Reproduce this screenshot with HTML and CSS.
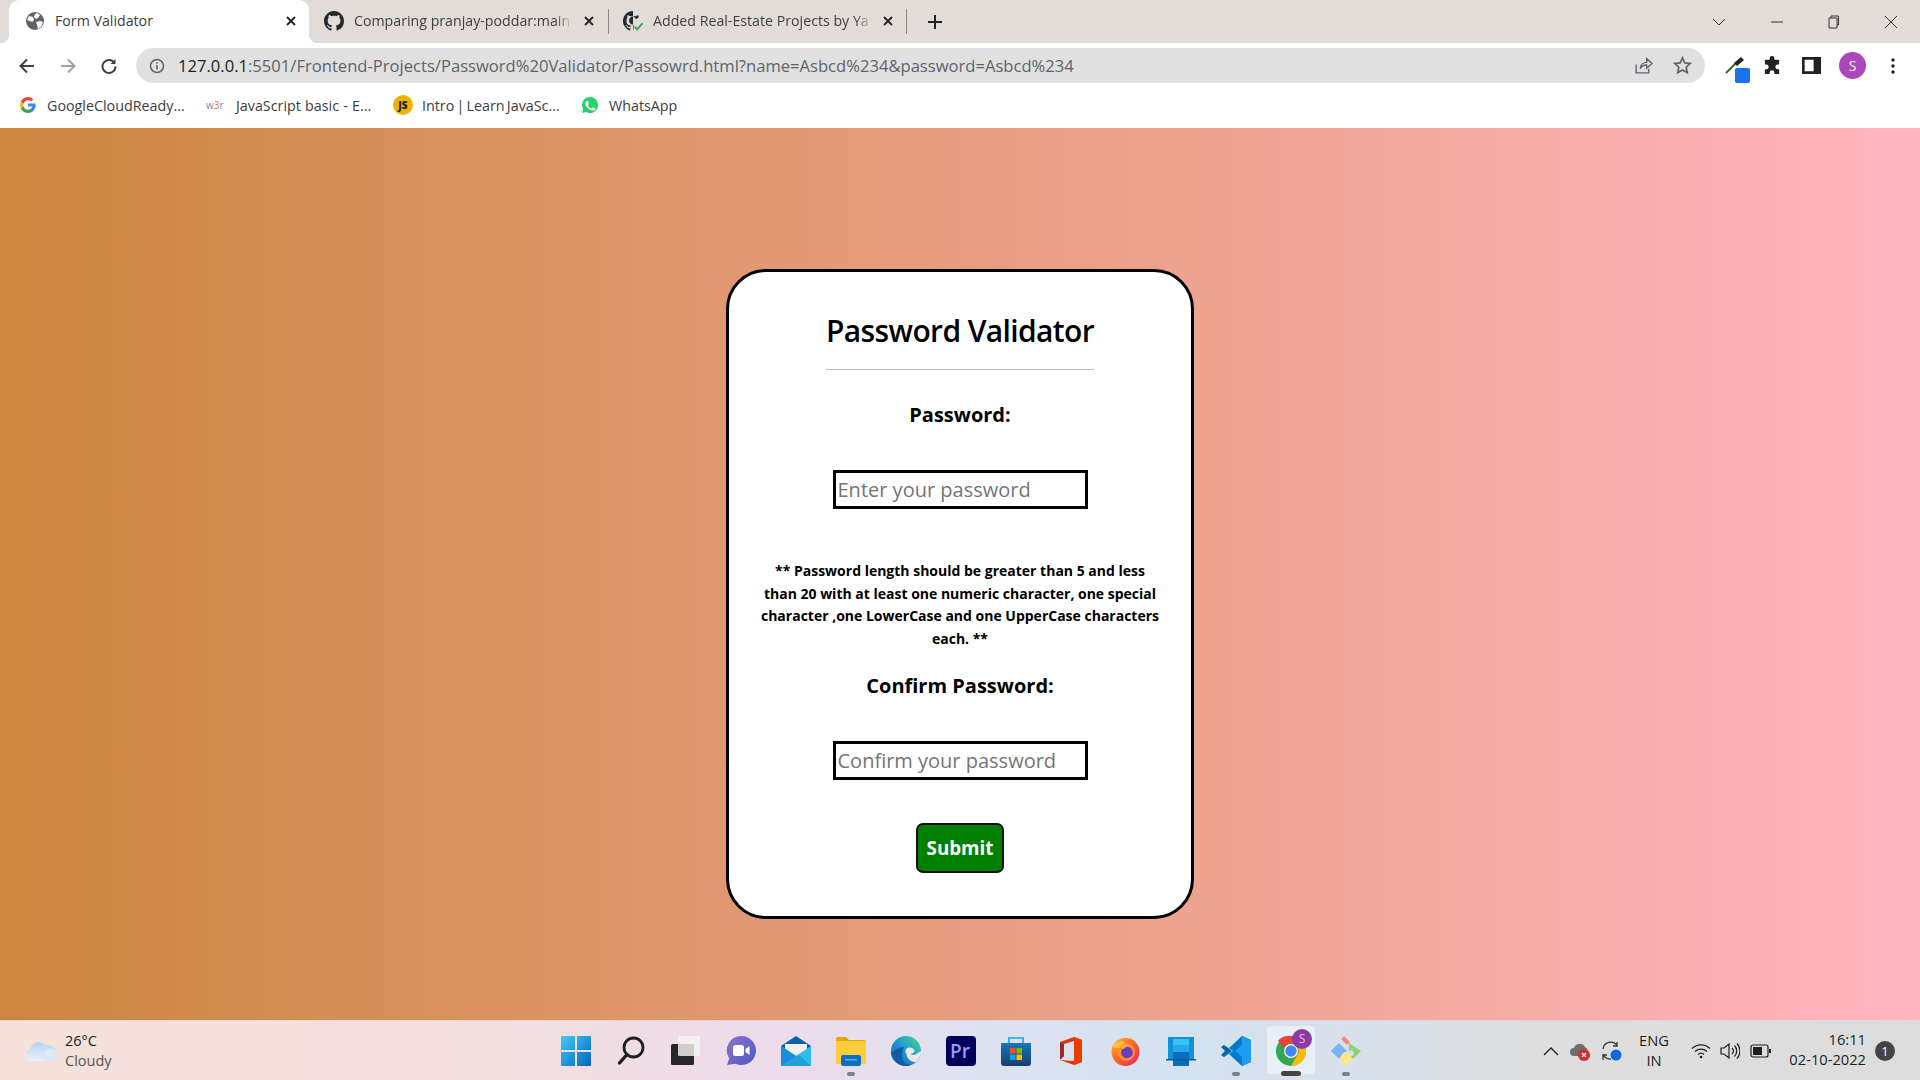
FILE: index.html
```html
<!DOCTYPE html>
<html lang="en">
<head>
<meta charset="utf-8">
<title>Form Validator</title>
<link rel="stylesheet" href="styles.css">
</head>
<body>
<header class="chrome">
  <div class="tabstrip">
    <div class="tab tab-active">
      <svg class="fav" viewBox="0 0 18 18"><circle cx="9" cy="9" r="9" fill="#5f6368"/><path d="M3 4l4 1 1 3-2 2-2-1-3-1zM11 1l3 2-2 3-2 1-2-2 1-3zM10 10l4-1 3 1-2 5-3 2-1-4z" fill="#fff"/></svg>
      <span class="tab-title">Form Validator</span>
      <svg class="tab-x" viewBox="0 0 10 10"><path d="M1 1l8 8M9 1l-8 8"/></svg>
    </div>
    <div class="tab tab-second">
      <svg class="fav" viewBox="0 0 16 16"><path fill="#24292f" d="M8 0C3.58 0 0 3.58 0 8c0 3.54 2.29 6.53 5.47 7.59.4.07.55-.17.55-.38 0-.19-.01-.82-.01-1.49-2.01.37-2.53-.49-2.69-.94-.09-.23-.48-.94-.82-1.13-.28-.15-.68-.52-.01-.53.63-.01 1.08.58 1.23.82.72 1.21 1.87.87 2.33.66.07-.52.28-.87.51-1.07-1.78-.2-3.64-.89-3.64-3.95 0-.87.31-1.59.82-2.15-.08-.2-.36-1.02.08-2.12 0 0 .67-.21 2.2.82.64-.18 1.32-.27 2-.27s1.36.09 2 .27c1.53-1.04 2.2-.82 2.2-.82.44 1.1.16 1.92.08 2.12.51.56.82 1.27.82 2.15 0 3.07-1.87 3.75-3.65 3.95.29.25.54.73.54 1.48 0 1.07-.01 1.93-.01 2.2 0 .21.15.46.55.38A8.01 8.01 0 0 0 16 8c0-4.42-3.58-8-8-8z"/></svg>
      <span class="tab-title tab-fade">Comparing pranjay-poddar:main</span>
      <svg class="tab-x" viewBox="0 0 10 10"><path d="M1 1l8 8M9 1l-8 8"/></svg>
    </div>
    <div class="tab tab-third">
      <svg class="fav" viewBox="0 0 18 18"><path fill="#24292f" d="M9 0a9 9 0 0 0-3 17.500c.4.1.6-.2.6-.4v-1.600c-2.500.5-3-1-3-1-.4-1-1-1.300-1-1.300-.8-.6 0-.6 0-.6.900.1 1.400.9 1.400.9.800 1.400 2.100 1 2.600.8.100-.6.300-1 .600-1.200-2-.2-4.100-1-4.100-4.400 0-1 .300-1.800.900-2.400-.100-.2-.400-1.100.100-2.400 0 0 .800-.2 2.500.900a8.600 8.600 0 0 1 4.600 0c1.700-1.100 2.500-.900 2.500-.900.300.700.400 1.500.300 2l-2.500 1.500C10.500 4.500 8 4.500 6.500 6S5 10 6.800 11.500c1 .8 2 1 2.700 1v3.500l-.500 2z"/><path d="M10.500 14l2.200 2.500L17.500 11" fill="none" stroke="#2da44e" stroke-width="1.600"/></svg>
      <span class="tab-title tab-fade">Added Real-Estate Projects by Ya</span>
      <svg class="tab-x" viewBox="0 0 10 10"><path d="M1 1l8 8M9 1l-8 8"/></svg>
    </div>
    <svg class="newtab" viewBox="0 0 14 14"><path d="M7 0v14M0 7h14"/></svg>
    <div class="winctl">
      <svg class="wc wc-chev" viewBox="0 0 14 8"><path d="M1 1l6 6 6-6"/></svg>
      <svg class="wc wc-min" viewBox="0 0 14 8"><path d="M1 4h12"/></svg>
      <svg class="wc wc-res" viewBox="0 0 14 14"><path d="M3 3h8v10H3zM5 3V1h7.500v9H11"/></svg>
      <svg class="wc wc-close" viewBox="0 0 14 14"><path d="M1 1l12 12M13 1L1 13"/></svg>
    </div>
  </div>
  <div class="toolbar">
    <svg class="nav" viewBox="0 0 16 16"><path d="M15 8H2M8 1.500L1.500 8 8 14.500" stroke="#3c4043"/></svg>
    <svg class="nav" viewBox="0 0 16 16"><path d="M1 8h13M8 1.500L14.500 8 8 14.500" stroke="#9aa0a6"/></svg>
    <svg class="nav" viewBox="0 0 16 16"><path d="M13.500 5A6.500 6.500 0 1 0 14.500 8.500" stroke="#3c4043"/><path d="M14.500 1v5h-5z" fill="#3c4043"/></svg>
    <div class="omnibox">
      <svg class="info" viewBox="0 0 16 16"><circle cx="8" cy="8" r="6.500" fill="none" stroke="#5f6368" stroke-width="1.500"/><path d="M8 7v4.500M8 4.200v1.600" stroke="#5f6368" stroke-width="1.600"/></svg>
      <span class="url"><span class="url-host">127.0.0.1</span>:5501/Frontend-Projects/Password%20Validator/Passowrd.html?name=Asbcd%234&amp;password=Asbcd%234</span>
      <svg class="omni-ic" viewBox="0 0 18 18"><path d="M2 8v8h12v-4M6 12c0-4 3-6 6-6V2.500L17 7l-5 4.500V8.500c-3 0-5 1-6 3.500z" fill="none" stroke="#5f6368" stroke-width="1.300"/></svg>
      <svg class="omni-ic omni-star" viewBox="0 0 18 18"><path d="M9 1.800l2.200 4.700 5.100.6-3.800 3.500 1 5.100L9 13.200l-4.500 2.500 1-5.100L1.700 7.100l5.100-.6z" fill="none" stroke="#5f6368" stroke-width="1.600"/></svg>
    </div>
    <div class="ext">
      <svg class="ext-drop" viewBox="0 0 25 26"><path d="M1 16L12 5" stroke="#33691e" stroke-width="2"/><path d="M12 9l-3-3 7-6 3 3z" fill="#222"/><rect x="10" y="11" width="15" height="15" rx="2" fill="#1a73e8"/></svg>
      <svg class="ext-ic ext-puzzle" viewBox="0 0 20 20"><path fill="#202124" d="M7 2.500a2.500 2.500 0 0 1 5 0V4h5v5h-1.500a2.500 2.500 0 0 0 0 5H17v5h-5v-1.500a2.500 2.500 0 0 0-5 0V19H2v-5h1.500a2.500 2.500 0 0 0 0-5H2V4h5z"/></svg>
      <svg class="ext-ic ext-side" viewBox="0 0 18 18"><path fill-rule="evenodd" fill="#202124" d="M0 1h18v16H0zM2.500 3.500v11H11v-11z"/></svg>
      <span class="avatar">S</span>
      <svg class="ext-menu" viewBox="0 0 4 16"><circle cx="2" cy="2" r="1.700"/><circle cx="2" cy="8" r="1.700"/><circle cx="2" cy="14" r="1.700"/></svg>
    </div>
  </div>
  <div class="bookmarks">
    <div class="bm bm-g">
      <svg class="bm-ic" viewBox="0 0 18 18"><path fill="#4285f4" d="M17.600 9.200c0-.6-.1-1.200-.2-1.800H9v3.400h4.800a4.100 4.100 0 0 1-1.800 2.700v2.200h2.900c1.700-1.600 2.700-3.900 2.700-6.500z"/><path fill="#34a853" d="M9 18c2.400 0 4.500-.8 5.900-2.200L12 13.500c-.8.500-1.800.9-3 .9-2.300 0-4.300-1.600-5-3.700H1v2.300A9 9 0 0 0 9 18z"/><path fill="#fbbc05" d="M4 10.700a5.400 5.400 0 0 1 0-3.400V5H1a9 9 0 0 0 0 8z"/><path fill="#ea4335" d="M9 3.600c1.300 0 2.500.5 3.400 1.300L15 2.400A9 9 0 0 0 1 5l3 2.300c.7-2.100 2.700-3.700 5-3.700z"/></svg>
      <span>GoogleCloudReady...</span>
    </div>
    <div class="bm bm-w">
      <span class="w3r">w<b>3</b>r</span>
      <span>JavaScript basic - E...</span>
    </div>
    <div class="bm bm-js">
      <span class="js">JS</span>
      <span>Intro | Learn JavaSc...</span>
    </div>
    <div class="bm">
      <svg class="bm-ic" viewBox="0 0 18 18"><path fill="#25d366" d="M9 0a9 9 0 0 0-7.700 13.600L0 18l4.500-1.200A9 9 0 1 0 9 0z"/><path fill="#fff" d="M6 4.500c-.3 0-.8.100-1.200.6-.4.500-1 1.100-1 2.500 0 1.400 1 2.800 1.200 3 .2.200 2 3 4.800 4 2.300.8 2.800.7 3.300.6.500 0 1.600-.6 1.800-1.200.200-.6.200-1.100.100-1.200 0-.1-.2-.2-.5-.3l-1.800-.9c-.3-.1-.5-.1-.7.200l-.8 1c-.2.200-.3.200-.6.100-.3-.2-1.200-.5-2.200-1.400-.8-.7-1.400-1.600-1.500-1.900-.2-.3 0-.4.100-.6l.4-.5.300-.5c.1-.2 0-.4 0-.5L7 5c-.200-.5-.400-.5-.600-.500z"/></svg>
      <span>WhatsApp</span>
    </div>
  </div>
</header>

<main class="page">
  <form class="card">
    <h1 class="card-title">Password Validator</h1>
    <label class="field-label">Password:</label>
    <input class="field" type="password" placeholder="Enter your password">
    <p class="rules">** Password length should be greater than 5 and less<br>than 20 with at least one numeric character, one special<br>character ,one LowerCase and one UpperCase characters<br>each. **</p>
    <label class="field-label field-label-confirm">Confirm Password:</label>
    <input class="field field-confirm" type="password" placeholder="Confirm your password">
    <button class="submit" type="button">Submit</button>
  </form>
</main>

<footer class="taskbar">
  <div class="weather">
    <svg class="cloud" viewBox="0 0 32 22"><defs><linearGradient id="cg" x1="0" y1="0" x2="0" y2="1"><stop offset="0" stop-color="#b6d3f2"/><stop offset="1" stop-color="#e9f1f9"/></linearGradient></defs><path fill="url(#cg)" d="M7 21a6 6 0 0 1-1.500-11.800A8 8 0 0 1 20 5.500 6 6 0 0 1 26 21z"/><circle cx="25" cy="15" r="6.500" fill="#dbe8f5"/></svg>
    <div class="weather-text"><span class="w-temp">26°C</span><span class="w-desc">Cloudy</span></div>
  </div>
  <div class="tb-icons">
    <svg class="tb" viewBox="0 0 30 30"><defs><linearGradient id="win" x1="0" y1="0" x2="1" y2="1"><stop offset="0" stop-color="#45c8f8"/><stop offset="1" stop-color="#0067c0"/></linearGradient></defs><path fill="url(#win)" d="M0 1a1 1 0 0 1 1-1h13v14H0zM16 0h13a1 1 0 0 1 1 1v13H16zM0 16h14v14H1a1 1 0 0 1-1-1zM16 16h14v13a1 1 0 0 1-1 1H16z"/></svg>
    <svg class="tb" viewBox="0 0 30 30"><circle cx="17.500" cy="11.500" r="9.500" fill="none" stroke="#1f1f1f" stroke-width="2.800"/><path d="M11 18.500L3.500 27" stroke="#1f1f1f" stroke-width="3.400" stroke-linecap="round"/></svg>
    <svg class="tb" viewBox="0 0 30 30"><rect x="0" y="8" width="23" height="21" rx="1.500" fill="#262626"/><rect x="7" y="0" width="22" height="20" rx="1.500" fill="#f4f4f4" fill-opacity=".82"/></svg>
    <svg class="tb" viewBox="0 0 30 30"><defs><linearGradient id="chat" x1="0" y1="0" x2="1" y2="1"><stop offset="0" stop-color="#8f72c9"/><stop offset="1" stop-color="#4f57c8"/></linearGradient></defs><path fill="url(#chat)" d="M15.500 0a14.500 14.500 0 1 1-6 27.700L1 29l2.200-6.500A14.500 14.500 0 0 1 15.500 0z"/><rect x="7" y="9" width="11" height="11" rx="2.500" fill="#fff"/><path d="M19.500 13l4-3v9l-4-3z" fill="#fff"/></svg>
    <svg class="tb" viewBox="0 0 30 30"><path fill="#0f5fad" d="M15 0l15 10v4H0v-4z"/><path fill="#f1f1f1" d="M4 8h22v10H4z"/><path fill="#2ebcf0" d="M0 10l15 10 15-10v20H0z"/><path fill="#148fdc" d="M0 30V10l15 10-15 10z"/><path fill="#1a79c4" d="M30 30H0l15-10 4-.5z" fill-opacity=".45"/></svg>
    <span class="tb-item tb-dot"><svg class="tb" viewBox="0 0 30 30"><path fill="#e5a50a" d="M0 3a2 2 0 0 1 2-2h8l3 3h15a2 2 0 0 1 2 2v6H0z"/><rect x="0" y="5" width="30" height="23" rx="1" fill="#fecd3c"/><rect x="5" y="19" width="20" height="11" rx="2" fill="#0e6ec2"/><rect x="9" y="23" width="12" height="1.500" fill="#5cb3ec"/></svg></span>
    <svg class="tb" viewBox="0 0 30 30"><defs><linearGradient id="edge" x1="0" y1="1" x2="1" y2="0"><stop offset="0" stop-color="#0c59a4"/><stop offset=".55" stop-color="#1fa0d8"/><stop offset="1" stop-color="#4fdc72"/></linearGradient></defs><circle cx="15" cy="15" r="15" fill="url(#edge)"/><path fill="#f0e5ed" d="M15.500 18c-2.500-2.500-.5-6.500 3-6.500 3 0 4.500 1.500 5 3 .3 2-2 3.500-4 3.500 1 1 4 1.500 6.500-.5L30 15c.3 5-3 9-5 11-3 .5-9-2-9.500-8z"/><path fill="#125ba6" d="M13 11c-5 0-10 4-13 6 .5 6 6 13 15 13 2 0 4-.5 6-1.500-5 1-10-2-10-8 0-4 1-8 2-9.500z"/></svg>
    <svg class="tb" viewBox="0 0 30 30"><rect width="30" height="30" rx="4" fill="#00005b"/><text class="pr-text" x="4" y="22">Pr</text></svg>
    <svg class="tb" viewBox="0 0 30 30"><defs><linearGradient id="store" x1="0" y1="0" x2="0" y2="1"><stop offset="0" stop-color="#1c74b8"/><stop offset="1" stop-color="#15406f"/></linearGradient></defs><path d="M8 7V2h14v5" fill="none" stroke="#36b9f2" stroke-width="2"/><path fill="url(#store)" d="M0 7h30v20a3 3 0 0 1-3 3H3a3 3 0 0 1-3-3z"/><rect x="9" y="12" width="5.500" height="5.500" fill="#f25022"/><rect x="15.500" y="12" width="5.500" height="5.500" fill="#7fba00"/><rect x="9" y="18.500" width="5.500" height="5.500" fill="#00a4ef"/><rect x="15.500" y="18.500" width="5.500" height="5.500" fill="#ffb900"/></svg>
    <svg class="tb" viewBox="0 0 30 30"><path fill="#d83b01" d="M4 6L18 1l8 3v22l-8 3L4 24l14 1V5L8 8v12l-4 3z"/><path fill="#a4262c" d="M4 6l4 2v12l-4 4z"/><path fill="#eb3c00" d="M18 1l8 3v22l-8 3z"/></svg>
    <svg class="tb" viewBox="0 0 30 30"><defs><linearGradient id="ff" x1="0" y1="0" x2="1" y2="1"><stop offset="0" stop-color="#ffb52e"/><stop offset=".55" stop-color="#ff5a30"/><stop offset="1" stop-color="#e3207a"/></linearGradient></defs><path fill="#ffc93a" d="M20 0c1 4 5 6 7 10 2 5 1 9-1 13l-8-15z"/><circle cx="14.500" cy="16" r="14" fill="url(#ff)"/><circle cx="15" cy="16" r="9" fill="#ff8f2a"/><path fill="#ffc13a" d="M1 11c3-5 8-7 13-5l-5 6c-3 0-5 0-8-1z"/><circle cx="16" cy="16.500" r="5.800" fill="#6a3bc0"/><path fill="#ffa436" d="M8 11c3-3 8-3 11-1-3 0-5 1-6 3z"/></svg>
    <svg class="tb" viewBox="0 0 30 30"><path fill="#1193d5" d="M2 1h26v22H2z"/><path fill="#35c3f3" d="M7 3h16v6H7z"/><path fill="#28a8ea" d="M7 9h16v7H7z"/><path fill="#0f6cbd" d="M7 16h16v14H7z"/><path fill="#0a5a9e" d="M0 23h30v1.500H0z"/></svg>
    <span class="tb-item tb-dot"><svg class="tb" viewBox="0 0 30 30"><path fill="#0065a9" d="M0 11l3-2 8 6-8 6-3-2 4-4z"/><path fill="#007acc" d="M21 0l9 4v22l-9 4-13-12-5 3 9-6-9-6 5 3z"/><path fill="#1f9cf0" d="M21 0l9 4v22l-9 4V21l-7-6 7-6z"/></svg></span>
    <span class="tb-item tb-active"><span class="tb-hover"></span><svg class="tb tb-over" viewBox="0 0 30 30"><circle cx="15" cy="15" r="15" fill="#34a853"/><path fill="#ea4335" d="M15 0a15 15 0 0 1 13 7.500H15a7.500 7.500 0 0 0-7 5L2 4.800A15 15 0 0 1 15 0z"/><path fill="#fbbc05" d="M28 7.500A15 15 0 0 1 15 30l6.500-11.200A7.500 7.500 0 0 0 21.500 11z"/><circle cx="15" cy="15" r="7" fill="#fff"/><circle cx="15" cy="15" r="5.700" fill="#4285f4"/></svg><span class="chrome-badge">S</span></span>
    <span class="tb-item tb-dot"><svg class="tb" viewBox="0 0 30 30"><path fill="#7ab4f5" d="M0 15l8-8 8 8-8 8z"/><path fill="#f28b82" d="M10 3l3-3 6 6-3 3z"/><path fill="#8ed26a" d="M18 7l12 8-8 8-5-5a3 3 0 1 0 1-3z"/><path fill="#fde58c" d="M8 23l5-7 3 0 6 7-7 7z"/></svg></span>
  </div>
  <div class="tray">
    <svg class="t-chev" viewBox="0 0 16 10"><path d="M1 9l7-7 7 7"/></svg>
    <svg class="t-ic t-cloudx" viewBox="0 0 22 20"><path d="M5 15a4 4 0 0 1 0-8 6 6 0 0 1 11-1 5 5 0 0 1 0 9z" fill="#6e6e6e"/><circle cx="15" cy="14" r="6" fill="#d92b2f"/><path d="M13 12l4 4M17 12l-4 4" stroke="#fff" stroke-width="1.300"/></svg>
    <svg class="t-ic t-sync" viewBox="0 0 22 22"><path d="M2 9a8 8 0 0 1 14-4M16 2v4h-4M10 19a8 8 0 0 1-8-5M2 20v-5h4" fill="none" stroke="#333" stroke-width="1.300"/><circle cx="15" cy="15" r="5.500" fill="#0f6cd6"/></svg>
    <div class="lang"><span>ENG</span><span>IN</span></div>
    <svg class="t-ic t-wifi" viewBox="0 0 20 16"><g fill="none" stroke="#1f1f1f" stroke-width="1.300"><path d="M1 5.500a13 13 0 0 1 18 0"/><path d="M4 8.500a9 9 0 0 1 12 0"/><path d="M7 11.500a4.500 4.500 0 0 1 6 0"/></g><circle cx="10" cy="14" r="1.300" fill="#1f1f1f"/></svg>
    <svg class="t-ic t-vol" viewBox="0 0 20 18"><g fill="none" stroke="#1f1f1f" stroke-width="1.200"><path d="M1 6h3l5-4v14l-5-4H1z"/><path d="M12 6a4 4 0 0 1 0 6"/><path d="M14.500 3.500a8 8 0 0 1 0 11"/><path d="M17 1.500a11 11 0 0 1 0 15"/></g></svg>
    <svg class="t-ic t-bat" viewBox="0 0 22 14"><rect x="1" y="1" width="17" height="12" rx="2" fill="none" stroke="#1f1f1f" stroke-width="1.200"/><rect x="3" y="3" width="9" height="8" fill="#1f1f1f"/><rect x="19" y="5" width="2" height="4" fill="#1f1f1f"/></svg>
    <div class="clock"><span>16:11</span><span>02-10-2022</span></div>
    <span class="notif">1</span>
  </div>
</footer>
</body>
</html>
```
FILE: styles.css
```css
* { box-sizing: border-box; }
html, body { height: 100%; }
body {
  margin: 0;
  width: 1920px;
  height: 1080px;
  overflow: hidden;
  display: flex;
  flex-direction: column;
  font-family: "Open Sans", "Noto Sans", sans-serif;
  color: #000;
}
svg { display: block; flex: none; }

/* browser chrome */
.chrome { flex: none; background: #fff; }
.tabstrip {
  height: 43px;
  background: #e3dbd8;
  display: flex;
  align-items: center;
  padding-left: 9px;
}
.tab {
  position: relative;
  height: 43px;
  display: flex;
  align-items: center;
  padding-bottom: 2px;
  font-size: 14.2px;
  color: #3c4043;
}
.tab-active {
  width: 300px;
  background: #fff;
  border-radius: 10px 10px 0 0;
  padding-left: 17px;
}
.tab-active::before, .tab-active::after {
  content: "";
  position: absolute;
  bottom: 0;
  width: 9px;
  height: 9px;
}
.tab-active::before { left: -9px; background: radial-gradient(circle at 0 0, transparent 9px, #fff 9.5px); }
.tab-active::after { right: -9px; background: radial-gradient(circle at 100% 0, transparent 9px, #fff 9.5px); }
.tab-second { width: 300px; padding-left: 15px; }
.tab-third { width: 298px; padding-left: 14px; }
.tab-second::after, .tab-third::after {
  content: "";
  position: absolute;
  right: 0;
  top: 9px;
  height: 25px;
  width: 1px;
  background: #8d8886;
}
.fav { width: 20px; height: 20px; }
.tab-active .fav { width: 18px; height: 18px; }
.tab-title {
  margin-left: 11px;
  white-space: nowrap;
}
.tab-active .tab-title { width: 226px; }
.tab-second .tab-title { margin-left: 10px; width: 219px; }
.tab-third .tab-title { margin-left: 10px; width: 220px; }
.tab-fade {
  -webkit-mask-image: linear-gradient(to right, #000 92%, transparent);
  mask-image: linear-gradient(to right, #000 92%, transparent);
}
.tab-x {
  width: 10px;
  height: 10px;
  margin-left: 5px;
  fill: none;
  stroke: #202124;
  stroke-width: 1.8;
}
.tab-second .tab-x { margin-left: 11px; }
.tab-third .tab-x { margin-left: 10px; }
.newtab {
  width: 14px;
  height: 14px;
  margin-left: 21px;
  stroke: #202124;
  stroke-width: 2;
}
.winctl {
  margin-left: auto;
  display: flex;
  align-items: center;
  padding-right: 22px;
}
.wc { fill: none; stroke: #333; stroke-width: 1; }
.wc-chev { width: 14px; height: 8px; margin-right: 44px; }
.wc-min { width: 14px; height: 8px; margin-right: 42px; }
.wc-res { width: 14px; height: 14px; margin-right: 44px; }
.wc-close { width: 14px; height: 14px; }

.toolbar {
  height: 43px;
  display: flex;
  align-items: center;
  padding: 2px 0 0 19px;
}
.nav {
  width: 16px;
  height: 16px;
  margin-right: 25px;
  fill: none;
  stroke-width: 2;
}
.toolbar .nav:nth-of-type(3) { margin-right: 19px; }
.omnibox {
  width: 1569px;
  height: 35px;
  border-radius: 18px;
  background: #e0e0e0;
  display: flex;
  align-items: center;
  padding-left: 13px;
}
.info { width: 16px; height: 16px; flex: none; }
.url {
  margin-left: 13px;
  width: 1455.5px;
  flex: none;
  font-size: 16.6px;
  color: #5f6368;
  white-space: nowrap;
}
.url-host { color: #202124; }
.omni-ic { width: 19px; height: 19px; }
.omni-star { margin-left: 20px; }
.ext {
  display: flex;
  align-items: flex-start;
  padding-left: 20px;
  height: 35px;
}
.ext-drop { width: 25px; height: 26px; margin-top: 9px; }
.ext-ic { width: 19px; height: 19px; margin-top: 8px; }
.ext-puzzle { margin-left: 13px; }
.ext-side { margin-left: 20px; }
.avatar {
  width: 27px;
  height: 27px;
  margin: 4px 0 0 18px;
  border-radius: 50%;
  background: #ab47bc;
  color: #fff;
  font-size: 14px;
  line-height: 27px;
  text-align: center;
}
.ext-menu { width: 4px; height: 16px; margin: 10px 0 0 24.5px; fill: #202124; }

.bookmarks {
  height: 42px;
  display: flex;
  align-items: center;
  padding: 0 0 4px 20px;
  font-size: 14.3px;
  color: #3c4043;
}
.bm { display: flex; align-items: center; gap: 11px; white-space: nowrap; }
.bm-g { width: 186px; }
.bm-w { width: 188px; word-spacing: 0.5px; }
.bm-js { width: 188px; gap: 9px; margin-left: -1px; margin-right: 1px; word-spacing: -1.5px; }
.bm-ic { width: 16px; height: 16px; }
.w3r { width: 19px; font-size: 10px; color: #7a8aa0; }
.w3r b { font-weight: 400; color: #c07a50; }
.js {
  width: 20px;
  height: 20px;
  border-radius: 50%;
  background: #f0b400;
  color: #222;
  font-size: 10px;
  font-weight: 800;
  line-height: 20px;
  text-align: center;
}

/* page */
.page {
  flex: 1;
  min-height: 0;
  background: linear-gradient(to right, #cd853f, #ffb6c1);
  display: flex;
  justify-content: center;
  align-items: flex-start;
  padding-top: 141px;
}
.card {
  width: 468px;
  height: 650px;
  background: #fff;
  border: 3px solid #000;
  border-radius: 40px;
  display: flex;
  flex-direction: column;
  align-items: center;
}
.card-title {
  margin: 37px 0 0;
  width: 268px;
  padding-bottom: 16px;
  border-bottom: 1px solid #c0c0c0;
  font-size: 30px;
  line-height: 44px;
  font-weight: 600;
  letter-spacing: -0.62px;
  text-align: center;
  white-space: nowrap;
}
.field-label {
  margin-top: 30px;
  font-size: 20px;
  line-height: 30px;
  font-weight: 700;
  white-space: nowrap;
}
.field {
  margin-top: 40px;
  width: 255px;
  height: 39px;
  border: 3px solid #000;
  border-radius: 0;
  padding: 0 2px;
  background: #fff;
  font-family: inherit;
  font-size: 20px;
  outline: none;
}
.field::placeholder { color: #757575; opacity: 1; }
.rules {
  margin: 51px 0 0;
  font-size: 14px;
  line-height: 22.67px;
  font-weight: 700;
  text-align: center;
  white-space: nowrap;
}
.field-label-confirm { margin-top: 20px; }
.submit {
  margin-top: 43px;
  width: 88px;
  height: 50px;
  background: #008000;
  color: #fff;
  border: 2px solid #111;
  border-radius: 7px;
  font-family: inherit;
  font-size: 18.8px;
  font-weight: 700;
  padding: 0;
}

/* taskbar */
.taskbar {
  flex: none;
  height: 60px;
  display: grid;
  grid-template-columns: 561px 800px 1fr;
  background: linear-gradient(to right, #f6e1da 0%, #f2dfdf 25%, #ecdcec 42%, #dfe2f0 50%, #d4e2ef 62%, #d8e0ea 72%, #dedede 80%, #dcdcdc 100%);
  border-top: 1px solid #dcd8da;
}
.weather {
  display: flex;
  align-items: flex-start;
  padding: 16px 0 0 25px;
}
.cloud { width: 32px; height: 22px; margin-top: 3px; }
.weather-text {
  margin-left: 8px;
  margin-top: -6px;
  display: flex;
  flex-direction: column;
  font-size: 14.5px;
  line-height: 20px;
}
.w-temp { color: #1a1a1a; }
.w-desc { color: #555; }
.tb-icons {
  display: flex;
  justify-content: space-between;
  padding-top: 15px;
}
.tb { width: 30px; height: 30px; }
.tb-item { position: relative; width: 30px; height: 30px; display: block; }
.tb-dot::after {
  content: "";
  position: absolute;
  left: 11px;
  top: 36px;
  width: 8px;
  height: 4px;
  border-radius: 2px;
  background: #7b7f86;
}
.tb-hover {
  position: absolute;
  left: -9px;
  top: -10px;
  width: 48px;
  height: 48px;
  border-radius: 4px;
  background: #e9eff6;
}
.tb-active::after {
  content: "";
  position: absolute;
  left: 5px;
  top: 35px;
  width: 20px;
  height: 5px;
  border-radius: 3px;
  background: #444;
}
.tb-over { position: relative; }
.chrome-badge {
  position: absolute;
  left: 16px;
  top: -7px;
  width: 20px;
  height: 20px;
  border-radius: 50%;
  background: #8e3aa6;
  color: #e3c4ea;
  font-size: 12px;
  line-height: 20px;
  text-align: center;
}
.pr-text { font-family: "Open Sans", sans-serif; font-size: 19px; font-weight: 600; fill: #9999ff; }
.tray {
  display: flex;
  align-items: center;
  padding: 0 0 0 182px;
  font-size: 14.7px;
  color: #1f1f1f;
}
.t-chev { width: 16px; height: 10px; fill: none; stroke: #1f1f1f; stroke-width: 1.3; }
.t-ic { flex: none; }
.t-cloudx { width: 22px; height: 20px; margin-left: 10px; }
.t-sync { width: 22px; height: 22px; margin-left: 10px; }
.lang {
  width: 32px;
  margin-left: 15px;
  padding-bottom: 2px;
  display: flex;
  flex-direction: column;
  align-items: center;
  line-height: 20px;
}
.t-wifi { width: 20px; height: 16px; margin-left: 21px; }
.t-vol { width: 20px; height: 18px; margin-left: 9px; }
.t-bat { width: 22px; height: 14px; margin-left: 10px; }
.clock {
  width: 84px;
  flex: none;
  margin-left: 10px;
  padding-bottom: 4px;
  display: flex;
  flex-direction: column;
  align-items: flex-end;
  line-height: 20px;
}
.notif {
  width: 20px;
  height: 20px;
  flex: none;
  margin-left: 9px;
  border-radius: 50%;
  background: #444;
  color: #fff;
  font-size: 13px;
  line-height: 20px;
  text-align: center;
}
```
